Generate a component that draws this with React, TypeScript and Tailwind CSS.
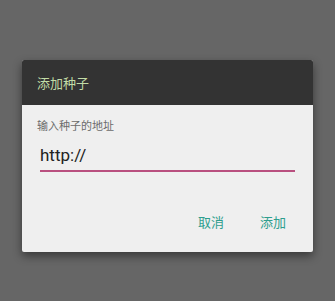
import React from "react";

export default function App() {
  return (
    <div
      className="w-[335px] h-[301px] bg-[#666666] pt-[60px] pl-[22px] overflow-hidden"
      style={{ fontFamily: 'Roboto, "Noto Sans CJK SC", sans-serif' }}
    >
      <div className="w-[291px] h-[192px] flex flex-col bg-[#efefef] rounded-[2px] shadow-[0_4px_10px_rgba(0,0,0,0.45)] overflow-hidden">
        <div className="h-[45px] bg-[#333333] flex items-center px-[15px] pt-[2px] text-[13px] text-[#c2dca6]">
          添加种子
        </div>
        <div className="flex flex-col px-[15px] pt-[15px]">
          <div className="text-[11px] leading-[14px] text-[#6b6b6b]">输入种子的地址</div>
          <div className="mt-[11px] ml-[3px] mr-[3px] border-b-2 border-[#b9507f] pb-[5px]">
            <div className="text-[17px] leading-[20px] text-[#222222]">http://</div>
          </div>
          <div className="mt-[42px] flex justify-end gap-[36px] pr-[12px] text-[13px] leading-[18px] text-[#2e9e8e]">
            <span>取消</span>
            <span>添加</span>
          </div>
        </div>
      </div>
    </div>
  );
}
